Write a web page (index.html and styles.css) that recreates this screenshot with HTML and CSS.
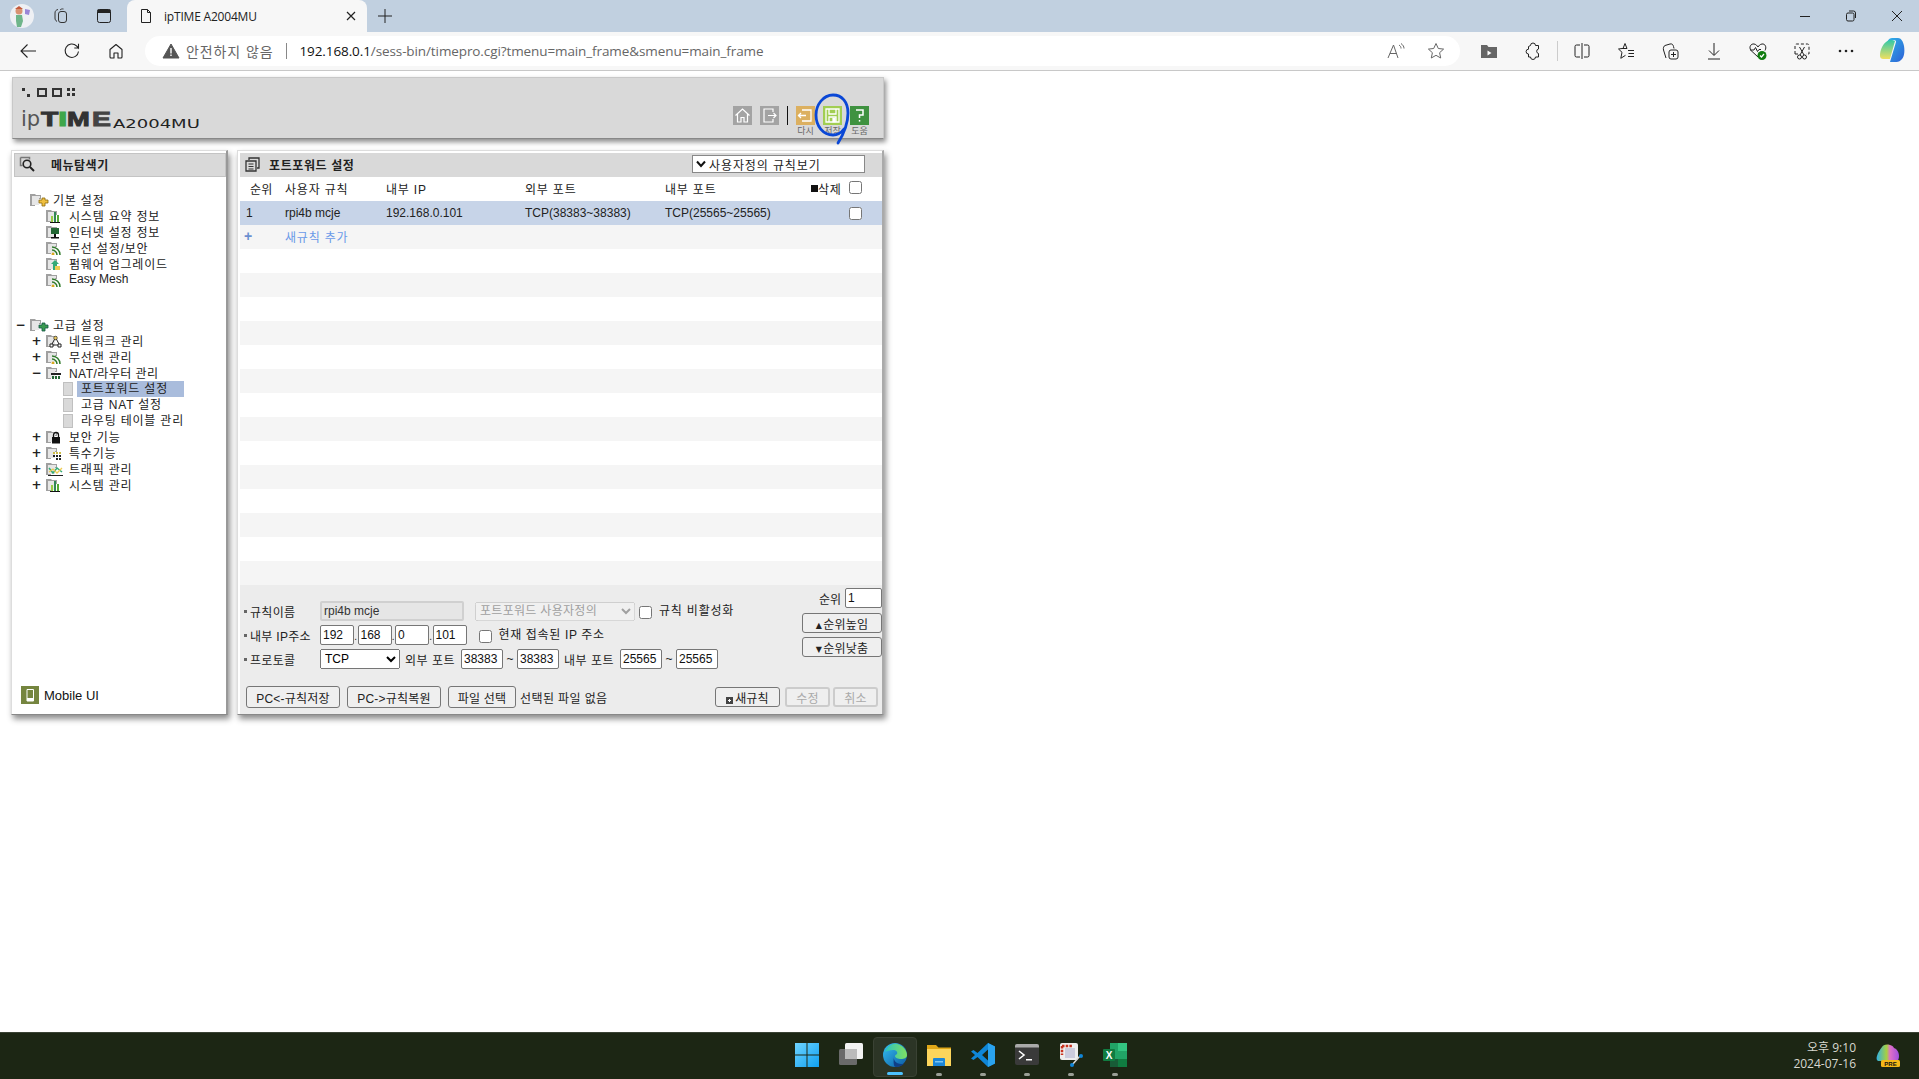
FILE: index.html
```html
<!DOCTYPE html>
<html lang="ko">
<head>
<meta charset="utf-8">
<title>ipTIME A2004MU</title>
<link rel="stylesheet" href="styles.css">
</head>
<body>
<div class="tabstrip">
  <div class="strip-btn avatar-btn">
    <svg width="24" height="24" viewBox="0 0 24 24"><circle cx="12" cy="12" r="12" fill="#eef0f4"/><circle cx="9" cy="7" r="3.5" fill="#d99272"/><path d="M5 5 9 2 13 5Z" fill="#c45a3c"/><path d="M6 11h6l1 6-2 6H7l-1-6Z" fill="#6fb58a"/><path d="M15 5l5 1-1 5-4-1Z" fill="#9a86d8"/></svg>
  </div>
  <div class="strip-btn">
    <svg width="18" height="18" viewBox="0 0 18 18" fill="none" stroke="#333" stroke-width="1"><rect x="6.500" y="4.500" width="8" height="11" rx="2.500"/><path d="M5 14.500C3.500 13.500 3 12.500 3 11V6C3 4 4 3 6 2.500M8 3C9 2 10 1.800 11.500 2"/></svg>
  </div>
  <div class="strip-btn">
    <svg width="18" height="18" viewBox="0 0 18 18"><rect x="2.500" y="2.500" width="13" height="13" rx="2" fill="none" stroke="#222"/><rect x="2.500" y="2.500" width="13" height="3.500" fill="#222"/></svg>
  </div>
  <div class="tab">
    <svg width="16" height="16" viewBox="0 0 16 16" fill="none" stroke="#222"><path d="M3.500 1.500h6l3 3v10h-9Z" stroke-linejoin="round"/><path d="M9.500 1.500v3h3"/></svg>
    <span class="tab-title">ipTIME A2004MU</span>
    <svg class="tab-close" width="12" height="12" viewBox="0 0 12 12" stroke="#222" stroke-width="1.200"><path d="M2 2l8 8M10 2l-8 8"/></svg>
  </div>
  <div class="strip-btn plus-btn">
    <svg width="16" height="16" viewBox="0 0 16 16" stroke="#222"><path d="M8 1v14M1 8h14"/></svg>
  </div>
  <div class="window-btns">
    <svg width="12" height="12" viewBox="0 0 12 12" stroke="#222"><path d="M1 6.500h10"/></svg>
    <svg width="12" height="12" viewBox="0 0 12 12" fill="none" stroke="#222"><rect x="1.500" y="3" width="7.500" height="8" rx="1.500"/><path d="M4 1h4.500A2 2 0 0 1 10.500 3v5"/></svg>
    <svg width="12" height="12" viewBox="0 0 12 12" stroke="#222"><path d="M1 1l10 10M11 1L1 11"/></svg>
  </div>
</div>

<div class="toolbar">
  <div class="nav-btn"><svg width="18" height="18" viewBox="0 0 18 18" fill="none" stroke="#222" stroke-width="1.100"><path d="M17 9H2M8.500 2.500 2 9l6.500 6.500"/></svg></div>
  <div class="nav-btn"><svg width="18" height="18" viewBox="0 0 18 18" fill="none" stroke="#222" stroke-width="1.100"><path d="M15.500 9.500A6.700 6.700 0 1 1 13.500 3.900L15.500 6V1.800M15.500 6h-4.200"/></svg></div>
  <div class="nav-btn"><svg width="18" height="18" viewBox="0 0 18 18" fill="none" stroke="#222" stroke-width="1.100"><path d="M3 7.500 9 2.500l6 5V15a1 1 0 0 1-1 1h-3v-5H7v5H4a1 1 0 0 1-1-1Z" stroke-linejoin="round"/></svg></div>
  <div class="address">
    <svg class="warn" width="18" height="16" viewBox="0 0 18 16"><path d="M9 1 17 15H1Z" fill="#555" stroke="#555" stroke-linejoin="round"/><path d="M8.300 5h1.400v5.500H8.300ZM8.300 11.500h1.400V13H8.300Z" fill="#fff"/></svg>
    <span class="insecure">안전하지 않음</span>
    <span class="addr-sep"></span>
    <span class="url"><b>192.168.0.1</b>/sess-bin/timepro.cgi?tmenu=main_frame&amp;smenu=main_frame</span>
    <svg class="addr-end read" width="20" height="20" viewBox="0 0 20 20" fill="none" stroke="#666"><path d="M2 17 7.500 4 12 17M4 12.500h7M13 4c1.500 1 2 2 2 3.500M15 2.500c2 1.500 3 3 3 5"/></svg>
    <svg class="addr-end" width="20" height="20" viewBox="0 0 20 20" fill="none" stroke="#666"><path d="M10 2.500 12.300 7.500l5.300.6-4 3.600 1.100 5.300L10 14.300 5.300 17l1.100-5.300-4-3.600 5.300-.6Z" stroke-linejoin="round"/></svg>
  </div>
  <div class="tb-icons">
    <div class="tb-btn"><svg width="18" height="18" viewBox="0 0 18 18"><path d="M1 3h6l1.500 2H17v11H1Z" fill="#666"/><path d="M7.500 8.500v5l4-2.500Z" fill="#fff"/></svg></div>
    <div class="tb-btn"><svg width="18" height="18" viewBox="0 0 18 18" fill="none" stroke="#222"><path d="M6.500 3.500a2.500 2.500 0 0 1 5 0h3v3.500a2.300 2.300 0 0 0 0 4.500v3.500h-3a2.500 2.500 0 0 1-5 0h-2v-3a2.300 2.300 0 0 1 0-4.800V4.500Z" stroke-linejoin="round"/></svg></div>
    <span class="tb-sep"></span>
    <div class="tb-btn"><svg width="18" height="18" viewBox="0 0 18 18" fill="none" stroke="#222"><path d="M7 3H3.500A1.500 1.500 0 0 0 2 4.500v9A1.500 1.500 0 0 0 3.500 15H7M11 3h3.500A1.500 1.500 0 0 1 16 4.500v9a1.500 1.500 0 0 1-1.500 1.500H11M9 1v16"/></svg></div>
    <div class="tb-btn"><svg width="18" height="18" viewBox="0 0 18 18" fill="none" stroke="#222"><path d="M8 1.500 10 6.500 5 6.500 1.500 7l3.500 3.300-1.200 6 4.700-3M11 8.500h6M11.500 11.500h5.500M11 14.500h6" stroke-linejoin="round"/><path d="M8 1.500 6 6.500"/></svg></div>
    <div class="tb-btn"><svg width="18" height="18" viewBox="0 0 18 18" fill="none" stroke="#222"><path d="M5 16 2.500 8C2 6 2.800 4 4 3.500L9 2c2-.5 3 .5 3.500 2.500l.5 2"/><rect x="8" y="8" width="9" height="9" rx="2"/><path d="M12.500 10v5M10 12.500h5"/></svg></div>
    <div class="tb-btn"><svg width="18" height="18" viewBox="0 0 18 18" fill="none" stroke="#222"><path d="M9 1v12M4 8.500 9 13.500l5-5M3 17h12"/></svg></div>
    <div class="tb-btn"><svg width="20" height="20" viewBox="0 0 20 20"><path d="M10 16 3 9.500C.5 6 3 2.500 6 3c2 .3 3 1.500 4 3 1-1.500 2-2.700 4-3 3-.5 5 3 3 6.500" fill="none" stroke="#222"/><path d="M2 9h4l1.500-2.500 2 4 1.500-2H13" fill="none" stroke="#222"/><circle cx="14" cy="14.500" r="4.500" fill="#107c10"/><path d="M12 14.500l1.500 1.500 2.500-3" fill="none" stroke="#fff" stroke-width="1.200"/></svg></div>
    <div class="tb-btn"><svg width="18" height="18" viewBox="0 0 18 18" fill="none" stroke="#222"><path d="M2 12V3.500A1.500 1.500 0 0 1 3.500 2h11A1.500 1.500 0 0 1 16 3.500V12h-3M5 12H2" stroke-dasharray="3 2"/><circle cx="6.500" cy="15" r="2"/><circle cx="11.500" cy="15" r="2"/><path d="M7 13 11.500 5M11 13 6.500 5"/></svg></div>
    <div class="tb-btn"><svg width="16" height="4" viewBox="0 0 16 4" fill="#222"><circle cx="2" cy="2" r="1.300"/><circle cx="8" cy="2" r="1.300"/><circle cx="14" cy="2" r="1.300"/></svg></div>
    <div class="tb-btn copilot-btn"><svg width="26" height="28" viewBox="0 0 26 28"><defs><linearGradient id="cpA" x1="0" y1="0" x2="1" y2="1"><stop offset="0" stop-color="#2fb5e8"/><stop offset="1" stop-color="#2d5fd6"/></linearGradient><linearGradient id="cpB" x1="0" y1="0" x2="0" y2="1"><stop offset="0" stop-color="#30c8a8"/><stop offset="1" stop-color="#f0e060"/></linearGradient></defs><path d="M8 6C9 2 11 1 14 1h5c3 0 5 3 6 8 1 6 0 12-3 14-2 2-4 2-6 2H11l6-20c.5-2-3-3-4-1Z" fill="url(#cpA)"/><path d="M7 5C3 8 1 14 1 18c0 3 1 4 4 4h6l5-18C13 2 9 3 7 5Z" fill="url(#cpB)"/></svg></div>
  </div>
</div>

<main class="page">
  <div class="app">
    <header class="app-head">
      <div class="logo">
        <svg class="logo-dots" width="53" height="10" viewBox="0 0 53 10" fill="#333"><path d="M0 0h3v3H0ZM5 6h3v3H5Z"/><path d="M16 1h8v7h-8ZM31 1h8v7h-8Z" fill="none" stroke="#333" stroke-width="2"/><path d="M45 0h3v3h-3ZM50 0h3v3h-3ZM45 5h3v3h-3ZM50 5h3v3h-3Z"/></svg>
        <div class="logo-name"><span class="lg-ip">ip</span><span class="lg-t">T</span><span class="lg-i">I</span><span class="lg-m">M</span><span class="lg-e">E</span><span class="lg-model">A2004MU</span></div>
      </div>
      <div class="tools">
        <div class="tool gray"><svg width="19" height="19" viewBox="0 0 19 19" fill="none" stroke="#fff" stroke-width="1.200"><path d="M2.500 9.500 9.500 3l7 6.500M4.500 8v8h3.500v-4.500h3V16h3.500V8"/></svg></div>
        <div class="tool gray"><svg width="19" height="19" viewBox="0 0 19 19" fill="none" stroke="#fff" stroke-width="1.200"><path d="M13 6V3H4v13h9v-3M8 9.500h8M13.500 7l2.500 2.500-2.500 2.500"/></svg></div>
        <span class="tool-sep"></span>
        <div class="tool-col"><div class="tool orange"><svg width="19" height="19" viewBox="0 0 19 19" fill="none" stroke="#fff" stroke-width="1.300"><path d="M6 4h9v11H6M2 9.500h8M5 7 2.500 9.500 5 12"/></svg></div><span class="tool-label">다시</span></div>
        <div class="tool-col"><div class="tool lime"><svg width="19" height="19" viewBox="0 0 19 19" fill="none" stroke="#fff" stroke-width="1.300"><path d="M3 3h13v13H3ZM6 3v5h7V3M6 16v-5h7v5"/><path d="M10 12.500h2v3h-2Z" fill="#fff"/></svg></div><span class="tool-label">저장</span></div>
        <div class="tool-col"><div class="tool green"><svg width="19" height="19" viewBox="0 0 19 19" fill="none" stroke="#fff" stroke-width="1.500"><path d="M6 4h7v5H9.500v3"/><path d="M8.800 14h1.500v1.600H8.800Z" fill="#fff" stroke="none"/></svg></div><span class="tool-label">도움</span></div>
      </div>
      <svg class="ring" width="36" height="52" viewBox="0 0 36 52" fill="none" stroke="#0a47d6" stroke-width="2.800" stroke-linecap="round"><path d="M24 50C29 42 34 32 34 20 34 9 28 2 19 2 9 2 2 12 2 22c0 11 7 20 17 20 4 0 8-2 11-6"/></svg>
    </header>

    <div class="app-body">
      <aside class="sidebar">
        <div class="side-title">
          <svg width="18" height="16" viewBox="0 0 18 16" fill="none"><path d="M1.500 1.500h9v2M1.500 1.500v8h2" stroke="#777" stroke-width="1.500"/><circle cx="8" cy="8" r="3.800" stroke="#222" stroke-width="1.600"/><path d="M11 11l4 4" stroke="#222" stroke-width="2"/></svg>
          <span>메뉴탐색기</span>
        </div>
        <nav class="tree">
          <div class="node l1 first"><span class="exp"></span><svg class="ic" width="20" height="14" viewBox="0 0 20 14"><use href="#fld"/><path d="M12 5h3v2h3v3h-3v3h-3v-3H9V7h3Z" fill="#f0c040" stroke="#8a6a10" stroke-width=".8"/></svg><span>기본 설정</span></div>
          <div class="node l2"><span class="exp"></span><svg class="ic" width="20" height="14" viewBox="0 0 20 14"><use href="#fld"/><path d="M5 7h2v6H5Z" fill="#9c4"/><path d="M8 3h2v10H8Z" fill="#385"/><path d="M11 6h2v7h-2Z" fill="#5a3"/><path d="M4 13.500h10" stroke="#111"/></svg><span>시스템 요약 정보</span></div>
          <div class="node l2"><span class="exp"></span><svg class="ic" width="20" height="14" viewBox="0 0 20 14"><use href="#fld"/><path d="M5 3h8v6H5Z" fill="#263"/><path d="M8 9h2v3H8ZM5 12h8v1.500H5Z" fill="#111"/></svg><span>인터넷 설정 정보</span></div>
          <div class="node l2"><span class="exp"></span><svg class="ic" width="20" height="14" viewBox="0 0 20 14"><use href="#fld"/><use href="#wifi"/></svg><span>무선 설정/보안</span></div>
          <div class="node l2"><span class="exp"></span><svg class="ic" width="20" height="14" viewBox="0 0 20 14"><use href="#fld"/><path d="M9 3l4 4h-2v6H7V7H5Z" fill="#3a7"/><path d="M9 9h5v4H9Z" fill="#ec5"/></svg><span>펌웨어 업그레이드</span></div>
          <div class="node l2"><span class="exp"></span><svg class="ic" width="20" height="14" viewBox="0 0 20 14"><use href="#fld"/><use href="#wifi"/></svg><span class="latin">Easy Mesh</span></div>

          <div class="node l1 group"><span class="exp">−</span><svg class="ic" width="20" height="14" viewBox="0 0 20 14"><use href="#fld"/><path d="M12 5h3v2h3v3h-3v3h-3v-3H9V7h3Z" fill="#3a9a50" stroke="#154" stroke-width=".8"/></svg><span>고급 설정</span></div>
          <div class="node l2"><span class="exp">+</span><svg class="ic" width="20" height="14" viewBox="0 0 20 14"><use href="#fld"/><path d="M9.500 3.500 6 10M9.500 3.500 13 10M6 11h7" stroke="#222" fill="none"/><circle cx="9.500" cy="4" r="1.800" fill="#e8c860" stroke="#222" stroke-width=".6"/><path d="M4 10h3v3H4ZM12 10h3v3h-3Z" fill="#fff" stroke="#222"/></svg><span>네트워크 관리</span></div>
          <div class="node l2"><span class="exp">+</span><svg class="ic" width="20" height="14" viewBox="0 0 20 14"><use href="#fld"/><use href="#wifi"/></svg><span>무선랜 관리</span></div>
          <div class="node l2"><span class="exp">−</span><svg class="ic" width="20" height="14" viewBox="0 0 20 14"><use href="#fld"/><path d="M5 7h10v2H5Z" fill="#222"/><path d="M6 10h2v3H6ZM9 10h2v3H9ZM12 10h2v3h-2Z" fill="#263"/></svg><span class="mixed">NAT/라우터 관리</span></div>
          <div class="node l3"><span class="leaf"></span><span class="leaf-label on">포트포워드 설정</span></div>
          <div class="node l3"><span class="leaf"></span><span class="leaf-label">고급 NAT 설정</span></div>
          <div class="node l3"><span class="leaf"></span><span class="leaf-label">라우팅 테이블 관리</span></div>
          <div class="node l2"><span class="exp">+</span><svg class="ic" width="20" height="14" viewBox="0 0 20 14"><use href="#fld"/><path d="M6 7h8v6.500H6Z" fill="#111"/><path d="M7.500 7V5a2.500 2.500 0 0 1 5 0v2" fill="none" stroke="#111" stroke-width="1.300"/></svg><span>보안 기능</span></div>
          <div class="node l2"><span class="exp">+</span><svg class="ic" width="20" height="14" viewBox="0 0 20 14"><use href="#fld"/><path d="M7 6h2v2H7ZM10 6h2v2h-2ZM13 6h2v2h-2Z" fill="#cb4"/><path d="M7 9h2v2H7ZM10 9h2v2h-2ZM13 9h2v2h-2ZM10 12h2v2h-2ZM13 12h2v2h-2Z" fill="#222"/></svg><span>특수기능</span></div>
          <div class="node l2"><span class="exp">+</span><svg class="ic" width="20" height="14" viewBox="0 0 20 14"><use href="#fld"/><path d="M2 13.500h15" stroke="#222"/><path d="M3 6l4 5 4-5 5 4" fill="none" stroke="#3a7" stroke-width="1.500"/><path d="M3 10l4-3 4 4 5-5" fill="none" stroke="#ec5" stroke-width="1.300"/></svg><span>트래픽 관리</span></div>
          <div class="node l2"><span class="exp">+</span><svg class="ic" width="20" height="14" viewBox="0 0 20 14"><use href="#fld"/><path d="M5 7h2v6H5Z" fill="#9c4"/><path d="M8 3h2v10H8Z" fill="#385"/><path d="M11 6h2v7h-2Z" fill="#5a3"/><path d="M4 13.500h10" stroke="#111"/></svg><span>시스템 관리</span></div>
        </nav>
        <div class="mobile">
          <svg width="18" height="18" viewBox="0 0 18 18"><rect width="18" height="18" fill="#75853f"/><path d="M6 3.500h6.500V15H6Z" fill="none" stroke="#fff"/><path d="M6 12h6.500v3H6Z" fill="#fff"/></svg>
          <span>Mobile UI</span>
        </div>
      </aside>

      <section class="panel">
        <div class="panel-title">
          <svg width="15" height="15" viewBox="0 0 15 15" fill="none" stroke="#333" stroke-width="1.300"><path d="M4 3V1h10v10h-2"/><path d="M1 4h10v10H1Z" fill="#d9d9d9"/><path d="M3.500 7h5M3.500 9.500h5M3.500 12h5" stroke-width="1"/></svg>
          <span class="panel-name">포트포워드 설정</span>
          <div class="view-select"><svg width="10" height="8" viewBox="0 0 10 8" fill="none" stroke="#111" stroke-width="2"><path d="M1 1.500 5 6l4-4.500"/></svg><span>사용자정의 규칙보기</span></div>
        </div>
        <div class="rows">
          <div class="row head"><span class="c1">순위</span><span>사용자 규칙</span><span>내부 IP</span><span>외부 포트</span><span>내부 포트</span><span class="del"><i class="minus"></i>삭제<input type="checkbox"></span></div>
          <div class="row sel"><span class="c1">1</span><span>rpi4b mcje</span><span>192.168.0.101</span><span>TCP(38383~38383)</span><span>TCP(25565~25565)</span><span class="del only"><input type="checkbox"></span></div>
          <div class="row add"><span class="c1 plus">+</span><span>새규칙 추가</span></div>
          <div class="row"></div><div class="row"></div><div class="row"></div><div class="row"></div><div class="row"></div><div class="row"></div><div class="row"></div>
          <div class="row"></div><div class="row"></div><div class="row"></div><div class="row"></div><div class="row"></div><div class="row"></div><div class="row"></div>
        </div>
        <form class="form">
          <div class="form-top">
            <div class="fields">
              <div class="frow">
                <label class="flabel">규칙이름</label>
                <input class="in in-name" type="text" value="rpi4b mcje" disabled>
                <select class="sel-type" disabled><option>포트포워드 사용자정의</option></select>
                <input class="chk" type="checkbox">
                <span class="chk-text">규칙 비활성화</span>
              </div>
              <div class="frow">
                <label class="flabel">내부 IP주소</label>
                <input class="in in-ip" type="text" value="192"><span class="dot">.</span><input class="in in-ip" type="text" value="168"><span class="dot">.</span><input class="in in-ip" type="text" value="0"><span class="dot">.</span><input class="in in-ip" type="text" value="101">
                <input class="chk chk-cur" type="checkbox">
                <span class="chk-text up">현재 접속된 IP 주소</span>
              </div>
              <div class="frow">
                <label class="flabel">프로토콜</label>
                <select class="sel-proto"><option>TCP</option></select>
                <span class="port-label">외부 포트</span>
                <input class="in in-port" type="text" value="38383"><span class="tilde">~</span><input class="in in-port" type="text" value="38383">
                <span class="port-label">내부 포트</span>
                <input class="in in-port" type="text" value="25565"><span class="tilde">~</span><input class="in in-port" type="text" value="25565">
              </div>
            </div>
            <div class="order">
              <div class="order-row"><span>순위</span><input class="in in-order" type="text" value="1"></div>
              <button class="btn btn-order" type="button"><i class="tri">▲</i>순위높임</button>
              <button class="btn btn-order" type="button"><i class="tri">▼</i>순위낮춤</button>
            </div>
          </div>
          <div class="form-bottom">
            <button class="btn b-save" type="button">PC&lt;-규칙저장</button>
            <button class="btn b-save" type="button">PC-&gt;규칙복원</button>
            <button class="btn b-file" type="button">파일 선택</button>
            <span class="no-file">선택된 파일 없음</span>
            <button class="btn b-new" type="button"><i class="box-plus"></i>새규칙</button>
            <button class="btn b-off" type="button" disabled>수정</button>
            <button class="btn b-off" type="button" disabled>취소</button>
          </div>
        </form>
      </section>
    </div>
  </div>
</main>

<footer class="taskbar">
  <div class="task-icons">
    <div class="task"><svg width="24" height="24" viewBox="0 0 24 24"><defs><linearGradient id="win" x1="0" y1="0" x2="1" y2="1"><stop offset="0" stop-color="#6fd3ff"/><stop offset="1" stop-color="#0fa0f0"/></linearGradient></defs><path d="M0 0h11.500v11.500H0ZM12.500 0H24v11.500H12.500ZM0 12.500h11.500V24H0ZM12.500 12.500H24V24H12.500Z" fill="url(#win)"/></svg></div>
    <div class="task"><svg width="24" height="24" viewBox="0 0 24 24"><rect x="6" y="0" width="18" height="16" rx="1.500" fill="#f2f2f2"/><rect x="0" y="6" width="18" height="16" rx="1.500" fill="#6a6a6a"/><path d="M6 6h12v10H6Z" fill="#bbb"/></svg></div>
    <div class="task active"><svg width="24" height="24" viewBox="0 0 24 24"><defs><linearGradient id="edgeA" x1="0" y1="0" x2="1" y2="1"><stop offset="0" stop-color="#35c1f1"/><stop offset="1" stop-color="#0c59a4"/></linearGradient><linearGradient id="edgeB" x1="0" y1="0" x2="1" y2="0"><stop offset="0" stop-color="#2bc4c0"/><stop offset="1" stop-color="#80e060"/></linearGradient></defs><circle cx="12" cy="12" r="12" fill="url(#edgeA)"/><path d="M2 9C4 3 10 0 14 1c5 1 10 6 10 11 0 3-3 4-6 4s-6-1-6-3c0-1 1-1 2-2 1-2-1-4-4-4-3 0-6 1-8 2Z" fill="url(#edgeB)"/><path d="M11 13c-1 4 2 8 7 8 2 0 3-.5 4-1.500-2 3-6 4.500-9 4.500-2 0-3-3-2-11Z" fill="#0f3f87"/></svg><i class="bar"></i></div>
    <div class="task"><svg width="24" height="24" viewBox="0 0 24 24"><path d="M0 2h9l2.500 2.500H24V8H0Z" fill="#e0a818"/><path d="M0 6h24v17H0Z" fill="#fcd55c"/><path d="M7 15h10a1 1 0 0 1 1 1v7H6v-7a1 1 0 0 1 1-1Z" fill="#1b86d8"/><path d="M8 18h8v1.500H8Z" fill="#7cc6f2"/></svg><i class="pin"></i></div>
    <div class="task"><svg width="24" height="24" viewBox="0 0 24 24"><path d="M17 0 24 3.500v17L17 24 6.500 14 2.500 17 0 15.500 4 12 0 8.500 2.500 7l4 3ZM17 6.500 11 12l6 5.500Z" fill="#0f86d8"/><path d="M17 0 24 3.500v17L17 24Z" fill="#2aa3ef"/></svg><i class="pin"></i></div>
    <div class="task"><svg width="24" height="24" viewBox="0 0 24 24"><rect y="1" width="24" height="21" rx="2" fill="#3a3a3a"/><path d="M0 3a2 2 0 0 1 2-2h20a2 2 0 0 1 2 2v1.500H0Z" fill="#aaa"/><path d="M4 8l5 4-5 4" fill="none" stroke="#fff" stroke-width="1.600"/><path d="M11 16h6v1.500h-6Z" fill="#fff"/></svg><i class="pin"></i></div>
    <div class="task"><svg width="24" height="24" viewBox="0 0 24 24"><rect x="1" y="0" width="18" height="17" rx="2" fill="#eee"/><path d="M3 3h11M3 3v9" stroke="#c8321e" stroke-width="2.500" stroke-dasharray="2.500 1.200" fill="none"/><rect x="6" y="5" width="10" height="10" fill="#ccd"/><path d="M13 22 21 13" stroke="#ddd" stroke-width="1.400"/><circle cx="13" cy="22" r="2" fill="#0f86d8"/><circle cx="22" cy="13" r="2" fill="#0f86d8"/></svg><i class="pin"></i></div>
    <div class="task"><svg width="24" height="24" viewBox="0 0 24 24"><path d="M7 0h17v24H7Z" fill="#21a366"/><path d="M15 0h9v8h-9Z" fill="#33c481"/><path d="M15 16h9v8h-9Z" fill="#107c41"/><path d="M7 16h8v8H7Z" fill="#185c37"/><rect y="6" width="12" height="12" rx="1" fill="#107c41"/><text x="6" y="15.500" class="xl">X</text></svg><i class="pin"></i></div>
  </div>
  <div class="tray">
    <div class="clock"><span>오후 9:10</span><span>2024-07-16</span></div>
    <svg width="24" height="24" viewBox="0 0 24 24"><defs><linearGradient id="pre" x1="0" y1="0" x2="1" y2="0"><stop offset="0" stop-color="#2fb0e0"/><stop offset=".45" stop-color="#a8d040"/><stop offset=".6" stop-color="#e070c8"/><stop offset="1" stop-color="#a050e0"/></linearGradient></defs><path d="M6 3c1-2 4-3 8-2 2 .5 3 1 4 3 3 1 5 4 5 8 0 3-1 5-3 5H3c-2 0-3-2-2-5 1-4 3-6 5-9Z" fill="url(#pre)"/><rect x="5" y="16" width="19" height="7" rx="1.500" fill="#f5b818"/><text x="14.500" y="22" class="pre">PRE</text></svg>
  </div>
</footer>

<svg class="defs" width="0" height="0" aria-hidden="true">
  <symbol id="fld" viewBox="0 0 20 14" width="20" height="14"><path d="M0 1h5l1 1h5v4H9v2H5v5H0Z" fill="#a0a0a0"/><path d="M2 3h8v2H2Zm0 2h7v7H2Z" fill="#e6e6e6"/></symbol>
  <symbol id="wifi" viewBox="0 0 20 14" width="20" height="14"><g fill="none" stroke="#2f7a2a" stroke-width="1.500"><path d="M6 6a8 8 0 0 1 8 8M6 9a5 5 0 0 1 5 5"/></g><circle cx="7" cy="13" r="1.500" fill="#d8a820"/></symbol>
</svg>
</body>
</html>
```

FILE: styles.css
```css
* { box-sizing: border-box; }
html, body { margin: 0; height: 100%; }
body {
  height: 1079px;
  overflow: hidden;
  display: flex;
  flex-direction: column;
  background: #fff;
  font: 12px "Liberation Sans", "Noto Sans CJK KR", sans-serif;
  color: #222;
}
.defs { display: block; flex: none; }

/* browser tab strip */
.tabstrip { height: 32px; flex: none; display: flex; align-items: center; background: #c1d0e0; padding-left: 5px; }
.strip-btn { width: 43px; height: 32px; display: flex; align-items: center; justify-content: center; flex: none; }
.avatar-btn { width: 34px; }
.tab { width: 240px; height: 32px; margin-left: 2px; background: #f7f7f7; border-radius: 8px 8px 0 0; display: flex; align-items: center; padding-left: 11px; font: 12px "Open Sans", "Liberation Sans", sans-serif; color: #222; }
.tab-title { margin-left: 10px; flex: 1; letter-spacing: -.2px; }
.tab-close { margin-right: 10px; }
.plus-btn { width: 36px; }
.window-btns { margin-left: auto; display: flex; gap: 34px; padding-right: 16px; }

/* browser toolbar */
.toolbar { height: 39px; flex: none; display: flex; align-items: center; background: #f7f7f7; border-bottom: 1px solid #c8c8c8; padding: 0 0 1px 6px; }
.nav-btn { width: 44px; height: 32px; display: flex; align-items: center; justify-content: center; flex: none; }
.address { width: 1315px; height: 30px; margin-left: 7px; background: #fff; border-radius: 15px; display: flex; align-items: center; padding-left: 17px; flex: none; }
.insecure { margin-left: 6px; font: 14px "Noto Sans CJK KR", sans-serif; color: #666; letter-spacing: .9px; }
.addr-sep { width: 1px; height: 16px; background: #888; margin: 0 13px 0 12px; }
.url { font: 13.5px "Open Sans", "Liberation Sans", sans-serif; color: #666; flex: 1; letter-spacing: -.1px; }
.url b { font-weight: 400; color: #111; }
.addr-end { margin-right: 14px; }
.addr-end.read { margin-right: 20px; }
.tb-icons { display: flex; align-items: center; padding-left: 7px; }
.tb-btn { width: 44px; height: 32px; display: flex; align-items: center; justify-content: center; flex: none; }
.tb-sep { width: 1px; height: 20px; background: #ccc; margin: 0 2px; }
.copilot-btn { width: 48px; }

/* page */
.page { flex: 1; min-height: 0; padding: 6px 0 0 12px; }
.app { width: 872px; display: flex; flex-direction: column; gap: 11px; }
.app-head { position: relative; height: 62px; background: #d9d9d9; border: 1px solid #c8c8c8; border-bottom: 1px solid #888; box-shadow: 2px 3px 5px rgba(0,0,0,.45); display: flex; justify-content: space-between; padding: 10px 14px 0 9px; }
.logo-dots { display: block; }
.logo-name { display: flex; align-items: baseline; height: 24px; margin-top: 9px; color: #444; font-weight: 700; font-size: 21px; line-height: 24px; }
.lg-ip { font: 400 21px "DejaVu Sans", sans-serif; width: 20px; color: #555; margin-left: -1px; }
.lg-t, .lg-i, .lg-m, .lg-e { display: inline-block; transform-origin: left center; -webkit-text-stroke: 1px currentColor; }
.lg-t { width: 17px; transform: scaleX(1.35); color: #333; }
.lg-i { width: 9px; transform: scaleX(1.6); color: #3fa64a; }
.lg-m { width: 25px; transform: scaleX(1.3); color: #333; }
.lg-e { width: 21px; transform: scaleX(1.35); color: #444; }
.lg-model { display: inline-block; font: 400 12px "DejaVu Sans", sans-serif; color: #222; transform: scaleX(1.5) translateY(2px); transform-origin: left center; }
.tools { display: flex; align-items: flex-start; padding-top: 18px; }
.tool { width: 19px; height: 19px; display: flex; align-items: center; justify-content: center; flex: none; }
.tool.gray { background: #a3a3a3; margin-right: 8px; }
.tool.orange { background: #dcb060; }
.tool.lime { background: #a2ce52; }
.tool.green { background: #3f9240; }
.tool-sep { width: 1px; height: 19px; background: #111; }
.tool-col { display: flex; flex-direction: column; align-items: center; width: 19px; margin-left: 8px; }
.tool-label { font-size: 9px; color: #666; line-height: 13px; white-space: nowrap; }
.ring { position: absolute; left: 801px; top: 15px; }

.app-body { display: flex; gap: 9px; height: 565px; }
.sidebar { width: 217px; margin-left: -1px; flex: none; background: #fff; border-left: 1px solid #ddd; border-top: 1px solid #ddd; border-right: 2px solid #999; border-bottom: 1px solid #888; box-shadow: 2px 4px 6px rgba(0,0,0,.45); padding-top: 2px; display: flex; flex-direction: column; }
.side-title { height: 24px; margin: 0 0 0 2px; background: #d9d9d9; border: 1px solid #c4c4c4; display: flex; align-items: center; padding: 0 0 2px 4px; font-weight: 700; }
.side-title span { margin-left: 14px; letter-spacing: .5px; }
.tree { padding-top: 15px; }
.node { height: 16px; display: flex; align-items: center; white-space: nowrap; letter-spacing: .8px; color: #222; }
.node.l1 > span:last-child, .node.l2 > span:last-child { margin-top: -2px; }
.node.l1 { padding-left: 3px; }
.node.l2 { padding-left: 19px; }
.node.l3 { padding-left: 51px; }
.node.group { margin-top: 29px; }
.node.l2 > .latin { letter-spacing: 0; margin-top: 0; }
.node .mixed { letter-spacing: .45px; }
.exp { width: 12px; margin-right: 3px; text-align: center; font: 700 12px "DejaVu Sans", sans-serif; color: #222; flex: none; }
.ic { flex: none; margin-right: 3px; }
.leaf { width: 10px; height: 14px; background: #d9d9d9; border: 1px solid #c0c0c0; margin-right: 4px; flex: none; }
.leaf-label { height: 16px; line-height: 16px; padding: 0 12px 0 4px; width: 107px; }
.leaf-label.on { background: #a9bcdc; }
.mobile { margin-top: auto; display: flex; align-items: center; gap: 5px; padding: 0 0 10px 9px; font-size: 13px; color: #111; }

.panel { width: 647px; flex: none; background: #fff; border-left: 1px solid #ddd; border-top: 1px solid #ddd; border-right: 2px solid #aaa; border-bottom: 1px solid #888; box-shadow: 2px 4px 6px rgba(0,0,0,.45); padding: 2px 0 0 2px; display: flex; flex-direction: column; }
.panel-title { height: 24px; flex: none; background: #d9d9d9; display: flex; align-items: center; padding: 0 17px 2px 5px; font-weight: 700; }
.panel-name { margin-left: 9px; flex: 1; letter-spacing: .6px; }
.view-select { width: 173px; height: 18px; background: #fff; border: 1px solid #888; display: flex; align-items: center; padding-left: 3px; font-weight: 400; gap: 3px; letter-spacing: .9px; }
.rows { flex: none; }
.row { height: 24px; display: grid; grid-template-columns: 45px 101px 139px 140px 146px 71px; align-items: center; white-space: nowrap; color: #222; }
.row:nth-child(odd) { background: #f5f5f5; }
.row.head { background: #fff; letter-spacing: .8px; padding-bottom: 2px; }
.row.sel { background: #c7d4e8; }
.c1 { padding-left: 6px; }
.head .c1 { padding-left: 10px; letter-spacing: .3px; }
.del { display: flex; align-items: center; }
.del input { margin: -1px 0 0 7px; width: 13px; height: 13px; }
.del.only input { margin: 0 0 0 38px; }
.minus { width: 7px; height: 7px; background: #111; }
.add { color: #6a9ae8; letter-spacing: .8px; padding-bottom: 2px; }
.plus { font-weight: 700; font-size: 14px; padding-left: 4px; color: #6a8fd0; }

.form { flex: 1; background: #ececec; display: flex; flex-direction: column; }
.form-top { height: 96px; display: flex; justify-content: space-between; padding: 3px 0 0; }
.fields { padding: 13px 0 0 4px; display: flex; flex-direction: column; gap: 4px; }
.frow { height: 20px; display: flex; align-items: center; white-space: nowrap; letter-spacing: .8px; }
.flabel { width: 76px; display: flex; align-items: center; flex: none; letter-spacing: .3px; }
.flabel::before { content: ""; width: 3px; height: 3px; background: #666; margin-right: 3px; }
.in { height: 20px; border: 1px solid #767676; border-radius: 2px; background: #fff; font: 12px "Liberation Sans", sans-serif; color: #111; padding: 0 2px; margin: 0; flex: none; }
.in:disabled { background: #e6e6e6; border: 2px solid #d0d0d0; color: #333; }
.in-name { width: 144px; }
.sel-type { width: 160px; height: 19px; margin: 0 0 0 11px; font: 12px "Liberation Sans", "Noto Sans CJK KR", sans-serif; flex: none; letter-spacing: .3px; }
.chk { width: 13px; height: 13px; margin: 2px 0 0 4px; flex: none; }
.chk-text { margin: -4px 0 0 7px; }
.in-ip { width: 34px; }
.dot { width: 3.5px; text-align: center; align-self: flex-end; line-height: 16px; font-size: 10px; letter-spacing: 0; }
.chk-cur { margin-left: 12px; }
.chk-text.up { margin-left: 7px; letter-spacing: .65px; }
.sel-proto { width: 80px; height: 20px; margin: 0; font: 12px "Liberation Sans", sans-serif; flex: none; }
.port-label { margin: 0 6px 0 5px; width: 50px; letter-spacing: .5px; }
.in-port { width: 42px; }
.tilde { width: 14px; text-align: center; letter-spacing: 0; }
.order { width: 81px; display: flex; flex-direction: column; gap: 4px; align-items: flex-end; }
.order-row { display: flex; align-items: center; gap: 4px; margin-bottom: 1px; }
.in-order { width: 37px; }
.btn { font: 12px "Liberation Sans", "Noto Sans CJK KR", sans-serif; color: #222; background: #efefef; border: 1px solid #767676; border-radius: 3px; padding: 0; margin: 0; letter-spacing: .2px; white-space: nowrap; }
.btn-order { width: 80px; height: 20px; }
.tri { font: normal 8px "DejaVu Sans", sans-serif; vertical-align: 1px; margin-right: 1px; }
.form-bottom { display: flex; align-items: center; height: 22px; margin-top: 5px; padding-left: 6px; }
.b-save { width: 94px; height: 22px; margin-right: 7px; }
.b-file { width: 68px; height: 22px; }
.no-file { margin-left: 4px; flex: 1; letter-spacing: .4px; }
.b-new { width: 65px; height: 20px; margin-right: 5px; }
.b-off { width: 45px; height: 20px; margin-right: 3px; color: #aaa; border: 2px solid #ccc; }
.b-off:last-child { margin-right: 4px; }
.box-plus { display: inline-block; width: 7px; height: 7px; background: linear-gradient(#fff, #fff) center / 3px 1px no-repeat, linear-gradient(#fff, #fff) center / 1px 3px no-repeat, #444; margin-right: 2px; vertical-align: -1px; }

/* taskbar */
.taskbar { height: 47px; flex: none; background: #1c2614; border-top: 1px solid #3a4234; display: flex; align-items: center; justify-content: space-between; padding-left: 785px; }
.task-icons { display: flex; }
.task { position: relative; width: 44px; height: 40px; display: flex; align-items: center; justify-content: center; margin-top: 1px; padding-bottom: 3px; border-radius: 4px; }
.task.active { background: #2c3526; border: 1px solid #3a4234; }
.pin { position: absolute; left: 19px; bottom: 1px; width: 6px; height: 3px; border-radius: 2px; background: #9a9f96; }
.bar { position: absolute; left: 13px; bottom: 1px; width: 16px; height: 3px; border-radius: 2px; background: #4cc2ff; }
.xl { font: 700 10px "Liberation Sans", sans-serif; fill: #fff; text-anchor: middle; }
.pre { font: 700 6px "Liberation Sans", sans-serif; fill: #111; text-anchor: middle; }
.tray { display: flex; align-items: center; gap: 20px; padding-right: 19px; }
.clock { display: flex; flex-direction: column; align-items: flex-end; font: 12px/16px "Open Sans", "Noto Sans CJK KR", sans-serif; color: #d8d8d0; }
```
